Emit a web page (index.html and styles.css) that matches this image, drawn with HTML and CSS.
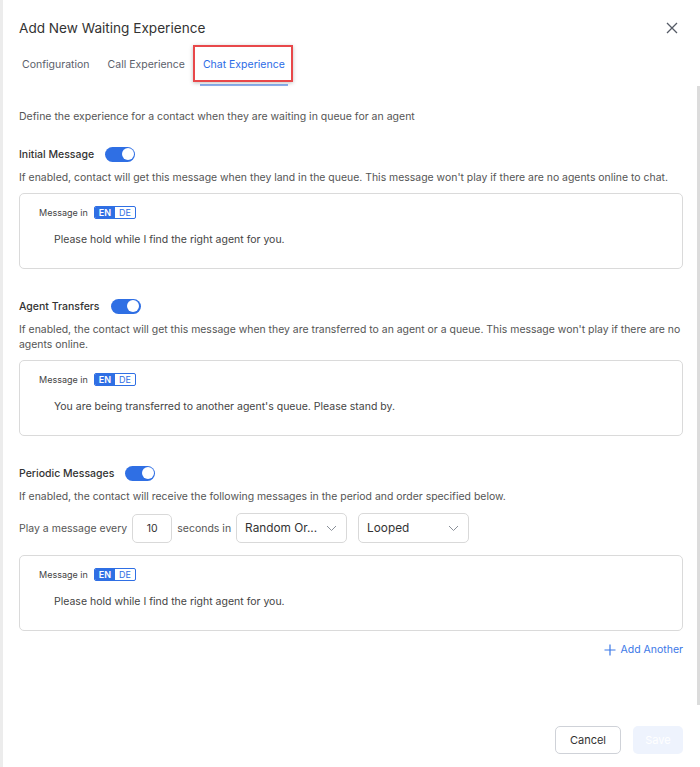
FILE: index.html
```html
<!DOCTYPE html>
<html lang="en">
<head>
    <meta charset="UTF-8">
    <meta name="viewport" content="width=device-width, initial-scale=1.0">
    <title>Add New Waiting Experience</title>
    <link rel="stylesheet" href="styles.css">
</head>
<body>
    <div class="modal">
        <header class="modal-header">
            <div class="title-row">
                <h1 class="title">Add New Waiting Experience</h1>
                <button class="close" aria-label="Close">
                    <svg width="12" height="12" viewBox="0 0 12 12"><path d="M1 1 L11 11 M11 1 L1 11" stroke="#555b66" stroke-width="1.3" fill="none"/></svg>
                </button>
            </div>
            <nav class="tabs">
                <span class="tab">Configuration</span>
                <span class="tab">Call Experience</span>
                <span class="tab active">Chat Experience</span>
            </nav>
        </header>

        <div class="content">
            <p class="intro">Define the experience for a contact when they are waiting in queue for an agent</p>

            <!-- Initial message -->
            <section class="block">
                <div class="block-head">
                    <span class="block-title">Initial Message</span>
                    <span class="toggle on"></span>
                </div>
                <p class="help">If enabled, contact will get this message when they land in the queue. This message won't play if there are no agents online to chat.</p>
                <div class="msg-box">
                    <div class="lang-row">
                        <span class="lang-label">Message in</span>
                        <span class="lang-switch"><span class="lang active">EN</span><span class="lang">DE</span></span>
                    </div>
                    <p class="msg-text">Please hold while I find the right agent for you.</p>
                </div>
            </section>

            <!-- Agent transfers -->
            <section class="block">
                <div class="block-head">
                    <span class="block-title">Agent Transfers</span>
                    <span class="toggle on"></span>
                </div>
                <p class="help">If enabled, the contact will get this message when they are transferred to an agent or a queue. This message won't play if there are no agents online.</p>
                <div class="msg-box">
                    <div class="lang-row">
                        <span class="lang-label">Message in</span>
                        <span class="lang-switch"><span class="lang active">EN</span><span class="lang">DE</span></span>
                    </div>
                    <p class="msg-text">You are being transferred to another agent's queue. Please stand by.</p>
                </div>
            </section>

            <!-- Periodic messages -->
            <section class="block">
                <div class="block-head">
                    <span class="block-title">Periodic Messages</span>
                    <span class="toggle on"></span>
                </div>
                <p class="help">If enabled, the contact will receive the following messages in the period and order specified below.</p>
                <div class="play-row">
                    <span>Play a message every</span>
                    <span class="num-input">10</span>
                    <span>seconds in</span>
                    <span class="select">Random Or...
                        <svg width="11" height="7" viewBox="0 0 11 7"><path d="M1 1 L5.5 5.5 L10 1" stroke="#8a9099" stroke-width="1" fill="none"/></svg>
                    </span>
                    <span class="select">Looped
                        <svg width="11" height="7" viewBox="0 0 11 7"><path d="M1 1 L5.5 5.5 L10 1" stroke="#8a9099" stroke-width="1" fill="none"/></svg>
                    </span>
                </div>
                <div class="msg-box">
                    <div class="lang-row">
                        <span class="lang-label">Message in</span>
                        <span class="lang-switch"><span class="lang active">EN</span><span class="lang">DE</span></span>
                    </div>
                    <p class="msg-text">Please hold while I find the right agent for you.</p>
                </div>
                <div class="add-row">
                    <span class="add-link">
                        <svg width="12" height="12" viewBox="0 0 12 12"><path d="M6 0.5 V11.5 M0.5 6 H11.5" stroke="#3b78e7" stroke-width="1.2" fill="none"/></svg>
                        Add Another
                    </span>
                </div>
            </section>
        </div>

        <footer class="modal-footer">
            <button class="btn btn-cancel">Cancel</button>
            <button class="btn btn-save">Save</button>
        </footer>
    </div>
</body>
</html>
```

FILE: styles.css
```css
/* Base */
body {
    margin: 0;
    font-family: 'Inter', 'Noto Sans', sans-serif;
    background-color: #fff;
    color: #333;
}
p {
    margin: 0;
}

/* Modal */
.modal {
    width: 700px;
    height: 767px;
    box-sizing: border-box;
    border-left: 3px solid #ececec;
    display: flex;
    flex-direction: column;
}

/* Header + tabs */
.modal-header {
    padding: 18px 0 0 16px;
}
.title-row {
    display: flex;
    justify-content: space-between;
    align-items: center;
    height: 20px;
    padding-right: 22px;
}
.title {
    margin: 0;
    font-size: 13.6px;
    font-weight: 400;
    color: #333;
}
.close {
    border: none;
    background: none;
    padding: 0;
    width: 12px;
    height: 12px;
    display: flex;
    cursor: pointer;
}
.tabs {
    display: flex;
    gap: 12px;
    margin-top: 18px;
}
.tab {
    position: relative;
    font-size: 10.5px;
    line-height: 18px;
    color: #5b606a;
    padding: 0 3px 10px;
    border-bottom: 2px solid transparent;
}
.tab.active {
    color: #2b6be6;
    border-bottom-color: #8db1f0;
}
/* red highlight frame around the active tab */
.tab.active::after {
    content: '';
    position: absolute;
    left: -7px;
    right: -5px;
    top: -11px;
    height: 33px;
    border: 2px solid #e8484a;
    box-shadow: 0 1px 4px rgba(0, 0, 0, 0.25);
}

.content {
    flex: 1;
    padding: 23px 14px 0 16px;
    border-right: 3px solid #dcdcdc;
    font-size: 10.5px;
}
.intro {
    line-height: 16px;
    color: #555;
}
.block {
    margin-top: 29px;
}
.block:first-of-type {
    margin-top: 21px;
}
.block-head {
    display: flex;
    align-items: center;
    gap: 11px;
    height: 16px;
}
.block-title {
    font-weight: 500;
    color: #333;
}
.toggle {
    width: 30px;
    height: 15px;
    border-radius: 8px;
    background-color: #ccc;
    position: relative;
}
.toggle.on {
    background-color: #2f6fe4;
}
.toggle::after {
    content: '';
    position: absolute;
    top: 1.5px;
    right: 1.5px;
    width: 12px;
    height: 12px;
    border-radius: 50%;
    background-color: #fff;
}
.help {
    margin: 8px -12px 0 0;
    font-size: 10.45px;
    line-height: 15px;
    color: #555;
}

/* Message card */
.msg-box {
    margin-top: 8px;
    border: 1px solid #dadada;
    border-radius: 5px;
    padding: 12px 19px 20px;
}
.lang-row {
    display: flex;
    align-items: center;
    gap: 6px;
    height: 13px;
}
.lang-label {
    font-size: 9px;
    color: #444;
}
.lang-switch {
    display: flex;
    border: 1px solid #2f6fe4;
    border-radius: 2px;
    overflow: hidden;
}
.lang {
    font-size: 9px;
    line-height: 11px;
    padding: 0 4px;
    color: #2f6fe4;
}
.lang.active {
    background-color: #2f6fe4;
    color: #fff;
    font-weight: 600;
}
.msg-text {
    margin: 13px 0 0 15px;
    line-height: 16px;
    color: #444;
}

/* Periodic controls */
.play-row {
    margin-top: 9px;
    display: flex;
    align-items: center;
    gap: 5px;
    color: #555;
}
.num-input {
    width: 40px;
    height: 29px;
    box-sizing: border-box;
    border: 1px solid #d9d9d9;
    border-radius: 5px;
    display: flex;
    align-items: center;
    justify-content: center;
    color: #333;
}
.select {
    width: 111px;
    height: 30px;
    box-sizing: border-box;
    border: 1px solid #d9d9d9;
    border-radius: 5px;
    display: flex;
    align-items: center;
    justify-content: space-between;
    padding: 0 9px 0 8px;
    font-size: 11.8px;
    color: #333;
}
.select + .select {
    margin-left: 6px;
}
.play-row + .msg-box {
    margin-top: 12px;
}
.add-row {
    display: flex;
    justify-content: flex-end;
    margin-top: 11px;
}
.add-link {
    display: flex;
    align-items: center;
    gap: 4px;
    line-height: 16px;
    color: #3b78e7;
    cursor: pointer;
}

/* Footer */
.modal-footer {
    display: flex;
    justify-content: flex-end;
    gap: 12px;
    padding: 21px 17px 13px 0;
}
.btn {
    height: 28px;
    border-radius: 5px;
    font-family: inherit;
    font-size: 11px;
    cursor: pointer;
}
.btn-cancel {
    width: 66px;
    background-color: #fff;
    border: 1px solid #cfd2d8;
    color: #333;
}
.btn-save {
    width: 50px;
    background-color: #eef3fd;
    border: none;
    color: #fff;
}
```
